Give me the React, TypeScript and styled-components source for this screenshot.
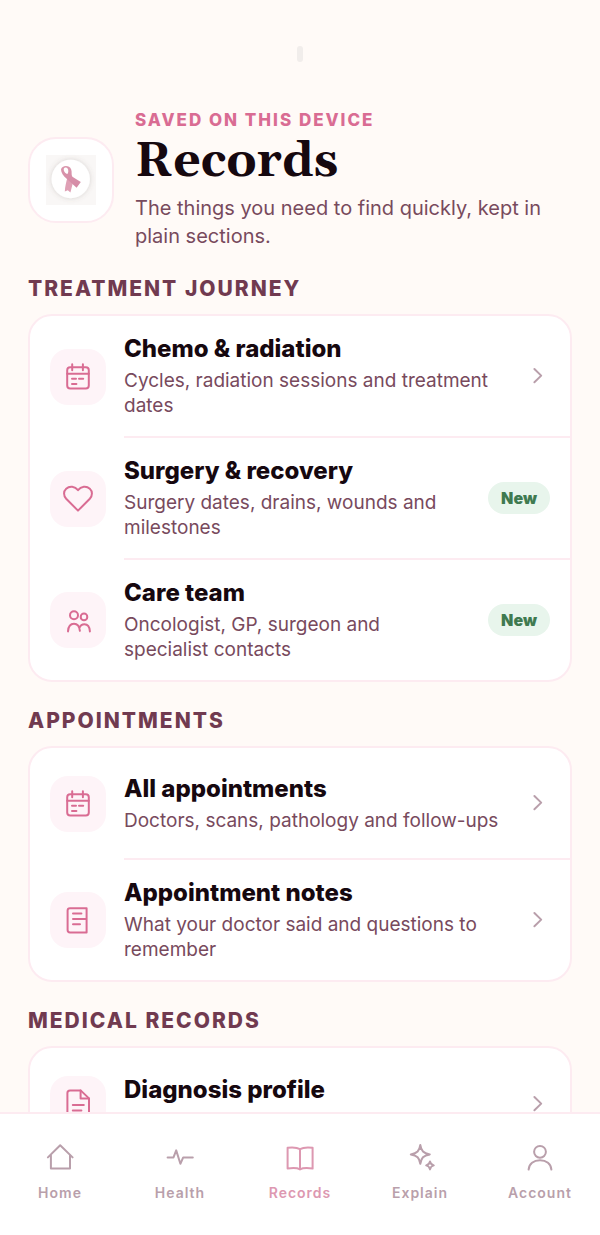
import React from "react";
import styled, { createGlobalStyle } from "styled-components";

const colors = {
  page: "#fffaf7",
  card: "#ffffff",
  line: "#fdebf1",
  ink: "#16080f",
  plum: "#713a50",
  detail: "#784a5d",
  pink: "#d96c93",
  tint: "#fef4f8",
  muted: "#b99fab",
};

const GlobalStyle = createGlobalStyle`
  * { box-sizing: border-box; }
  body {
    margin: 0;
    background: ${colors.page};
    color: ${colors.ink};
    font-family: Inter, "Liberation Sans", sans-serif;
  }
  h1, h2, h3, p, ul { margin: 0; padding: 0; }
  ul { list-style: none; }
  a { color: inherit; text-decoration: none; }
`;

const Shell = styled.div`
  display: flex;
  flex-direction: column;
  height: 100vh;
`;

const Content = styled.main`
  flex: 1;
  min-height: 0;
  overflow-y: auto;
  scrollbar-width: none;
  padding: 46px 28px 0;
`;

const Spinner = styled.div`
  width: 6px;
  height: 16px;
  margin: 0 auto 48px;
  border-radius: 3px;
  background: #f1edeb;
`;

const Header = styled.header`
  display: flex;
  align-items: center;
  gap: 21px;
`;

const LogoTile = styled.div`
  display: flex;
  flex: none;
  align-items: center;
  justify-content: center;
  width: 86px;
  height: 86px;
  border: 2px solid ${colors.line};
  border-radius: 28px;
  background: ${colors.card};
`;

const Eyebrow = styled.p`
  color: ${colors.pink};
  font-size: 17px;
  font-weight: 800;
  line-height: 20px;
  letter-spacing: 2px;
  text-transform: uppercase;
`;

const PageTitle = styled.h1`
  font-family: Georgia, Gelasio, "Liberation Serif", serif;
  font-size: 48px;
  font-weight: 700;
  line-height: 64px;
`;

const Intro = styled.p`
  color: ${colors.detail};
  font-size: 20px;
  line-height: 28px;
`;

const SectionTitle = styled.h2`
  margin: 26px 0 12px;
  color: ${colors.plum};
  font-size: 21px;
  font-weight: 800;
  line-height: 26px;
  letter-spacing: 2px;
  text-transform: uppercase;
`;

const Card = styled.ul`
  overflow: hidden;
  border: 2px solid ${colors.line};
  border-radius: 24px;
  background: ${colors.card};
`;

const RowLink = styled.a`
  display: flex;
  align-items: center;
  gap: 18px;
  padding-left: 20px;
`;

const IconTile = styled.span`
  display: flex;
  flex: none;
  align-items: center;
  justify-content: center;
  width: 56px;
  height: 56px;
  border-radius: 18px;
  background: ${colors.tint};
  color: ${colors.pink};
`;

const RowBody = styled.div<{ $divided: boolean }>`
  display: flex;
  flex: 1;
  align-items: center;
  gap: 20px;
  min-width: 0;
  min-height: 112px;
  padding: 18px 20px 18px 0;
  border-bottom: ${(p) => (p.$divided ? `2px solid ${colors.line}` : "0")};
`;

const RowText = styled.div`
  flex: 1;
  min-width: 0;
`;

const RowTitle = styled.h3`
  padding-top: 1px;
  margin-bottom: 5px;
  font-size: 24px;
  font-weight: 800;
  line-height: 28px;
`;

const RowDetail = styled.p`
  min-height: 25px;
  color: ${colors.detail};
  font-size: 19px;
  line-height: 25px;
`;

const Badge = styled.span`
  flex: none;
  padding: 4px 13px;
  border-radius: 16px;
  background: #e8f5ec;
  color: #3f7a50;
  font-size: 16px;
  font-weight: 900;
  line-height: 24px;
`;

const TabBar = styled.nav`
  display: flex;
  flex: none;
  padding: 28px 0 32px;
  border-top: 2px solid ${colors.line};
  background: ${colors.card};
`;

const Tab = styled.a<{ $active: boolean }>`
  display: flex;
  flex: 1;
  flex-direction: column;
  align-items: center;
  gap: 9px;
  color: ${(p) => (p.$active ? "#dd98b1" : colors.muted)};
  font-size: 14px;
  font-weight: 600;
  line-height: 20px;
  letter-spacing: 1px;
`;

const Svg = styled.svg`
  display: block;
  flex: none;
  fill: none;
  stroke: currentColor;
  stroke-width: 2;
  stroke-linecap: round;
  stroke-linejoin: round;
`;

const ChevronSvg = styled(Svg)`
  color: ${colors.muted};
`;

const glyphs = {
  calendar: (
    <>
      <rect x="5.2" y="6.2" width="21.6" height="21.2" rx="3" />
      <path d="M5.2 12.8H26.8M10.2 3.2v6M20.9 3.2v6M10 17.8h4M17 17.8h4.2M10 23h4.4" />
    </>
  ),
  heart: (
    <path d="M16 27.6L4.2 15.8C1.3 12.7 1.4 8.3 4.2 5.7C7.6 2.7 12.9 3.3 16 7.2C19.1 3.3 24.4 2.7 27.8 5.7C30.6 8.3 30.7 12.7 27.8 15.8Z" />
  ),
  people: (
    <>
      <circle cx="12" cy="11.2" r="4" />
      <circle cx="22" cy="12.9" r="3.3" />
      <path d="M6 27.4C6.3 22.4 8.6 19.8 12 19.8C15 19.8 17.4 22.2 17.9 26.8M17.3 24C18.4 21.4 20.2 20.2 22.4 20.2C25.6 20.2 27.6 22.8 27.9 27.4" />
    </>
  ),
  note: (
    <>
      <path d="M8 4.2H24.6V28.4H8Q5.6 28.4 5.6 26V6.6Q5.6 4.2 8 4.2Z" />
      <path d="M11 9.6h8.4M11 15h13M11 20.2h7" />
    </>
  ),
  document: (
    <>
      <path d="M18.6 2.4H8Q5.4 2.4 5.4 5V27Q5.4 29.6 8 29.6H24.4Q27 29.6 27 27V10.4Z" />
      <path d="M18.6 2.4V10.4H27M10.8 17h11M10.8 22.4h8.6" />
    </>
  ),
  home: <path d="M3.9 15.4L16.2 3.2L28.6 15.4M6.9 12.8V26.6H26V12.8" />,
  health: <path d="M3.6 15.4H9.5L12.2 8.4L16.4 21.8L19.2 15.4H28.8" />,
  book: (
    <path d="M16 7.2C13.4 5.6 9 5.2 3.6 5.8V26.6C9 25.8 13.4 26 16 27.4C18.6 26 23.2 25.8 28.6 26.6V5.8C23.2 5.2 18.6 5.6 16 7.2ZM16 7.2V27.4" />
  ),
  sparkle: (
    <>
      <path d="M16.3 3C17.2 9 19.4 11.4 25.8 12.4C19.4 13.4 17.2 15.8 16.3 21.8C15.4 15.8 13.2 13.4 6.8 12.4C13.2 11.4 15.4 9 16.3 3Z" />
      <path d="M26 19.4C26.5 22 27.2 22.8 29.8 23.4C27.2 24 26.5 24.8 26 27.4C25.5 24.8 24.8 24 22.2 23.4C24.8 22.8 25.5 22 26 19.4Z" />
    </>
  ),
  person: (
    <>
      <circle cx="16" cy="9.8" r="5.9" />
      <path d="M4.6 27.6C5 21.8 9.6 18.2 16 18.2S27 21.8 27.4 27.6" />
    </>
  ),
};

type GlyphName = keyof typeof glyphs;

const Icon = ({ name }: { name: GlyphName }) => (
  <Svg width="32" height="32" viewBox="0 0 32 32" aria-hidden="true">
    {glyphs[name]}
  </Svg>
);

const Chevron = () => (
  <ChevronSvg width="24" height="24" viewBox="0 0 24 24" aria-hidden="true">
    <path d="M8.4 5L15.2 11.6L8.4 18.2" />
  </ChevronSvg>
);

const RibbonLogo = () => (
  <svg width="52" height="52" viewBox="0 0 52 52" role="img" aria-label="Pink ribbon">
    <defs>
      <filter id="disc-shadow" x="-30%" y="-30%" width="160%" height="160%">
        <feDropShadow dx="0" dy="0" stdDeviation="2.5" floodColor="#6b5a58" floodOpacity="0.25" />
      </filter>
      <linearGradient id="ribbon" x1="0" y1="0" x2="0" y2="1">
        <stop offset="0" stopColor="#d996ac" />
        <stop offset="1" stopColor="#d58aa6" />
      </linearGradient>
    </defs>
    <rect x="1" y="1" width="50" height="50" fill="#f9f7f6" />
    <circle cx="25.7" cy="25" r="19.2" fill="#fff" filter="url(#disc-shadow)" />
    <path d="M22.6 23L28 24.6L27.6 30L25.4 38.6L22.8 36.2L19.8 37.4C20 33 21.4 27 22.6 23Z" fill="#dfa0b5" />
    <path d="M16 15.4C16.6 11.4 24.2 10.4 26.2 15.4C27.2 18.2 26 20.6 27.4 22.8L35.8 28L31.6 33.8L21.4 24.6C18.4 22 16 18.4 16 15.4ZM18.8 14.8C18.4 17 20.2 19.6 22.4 20C23.6 18.2 23.6 15.8 22.6 14.4C21.6 13.2 19.4 13.4 18.8 14.8Z" fill="url(#ribbon)" fillRule="evenodd" />
  </svg>
);

type RecordRow = { icon: GlyphName; title: string; detail?: string; isNew?: boolean };

const sections: { title: string; rows: RecordRow[] }[] = [
  {
    title: "Treatment journey",
    rows: [
      { icon: "calendar", title: "Chemo & radiation", detail: "Cycles, radiation sessions and treatment dates" },
      { icon: "heart", title: "Surgery & recovery", detail: "Surgery dates, drains, wounds and milestones", isNew: true },
      { icon: "people", title: "Care team", detail: "Oncologist, GP, surgeon and specialist contacts", isNew: true },
    ],
  },
  {
    title: "Appointments",
    rows: [
      { icon: "calendar", title: "All appointments", detail: "Doctors, scans, pathology and follow-ups" },
      { icon: "note", title: "Appointment notes", detail: "What your doctor said and questions to remember" },
    ],
  },
  {
    title: "Medical records",
    rows: [{ icon: "document", title: "Diagnosis profile" }],
  },
];

const tabs: { icon: GlyphName; label: string }[] = [
  { icon: "home", label: "Home" },
  { icon: "health", label: "Health" },
  { icon: "book", label: "Records" },
  { icon: "sparkle", label: "Explain" },
  { icon: "person", label: "Account" },
];

export default function App() {
  return (
    <Shell>
      <GlobalStyle />
      <Content>
        <Spinner />
        <Header>
          <LogoTile>
            <RibbonLogo />
          </LogoTile>
          <div>
            <Eyebrow>Saved on this device</Eyebrow>
            <PageTitle>Records</PageTitle>
            <Intro>The things you need to find quickly, kept in plain sections.</Intro>
          </div>
        </Header>
        {sections.map((section) => (
          <section key={section.title}>
            <SectionTitle>{section.title}</SectionTitle>
            <Card>
              {section.rows.map((row, i) => (
                <li key={row.title}>
                  <RowLink href="#">
                    <IconTile>
                      <Icon name={row.icon} />
                    </IconTile>
                    <RowBody $divided={i < section.rows.length - 1}>
                      <RowText>
                        <RowTitle>{row.title}</RowTitle>
                        <RowDetail>{row.detail}</RowDetail>
                      </RowText>
                      {row.isNew ? <Badge>New</Badge> : <Chevron />}
                    </RowBody>
                  </RowLink>
                </li>
              ))}
            </Card>
          </section>
        ))}
      </Content>
      <TabBar aria-label="Main">
        {tabs.map((tab) => (
          <Tab key={tab.label} href="#" $active={tab.label === "Records"}>
            <Icon name={tab.icon} />
            {tab.label}
          </Tab>
        ))}
      </TabBar>
    </Shell>
  );
}
